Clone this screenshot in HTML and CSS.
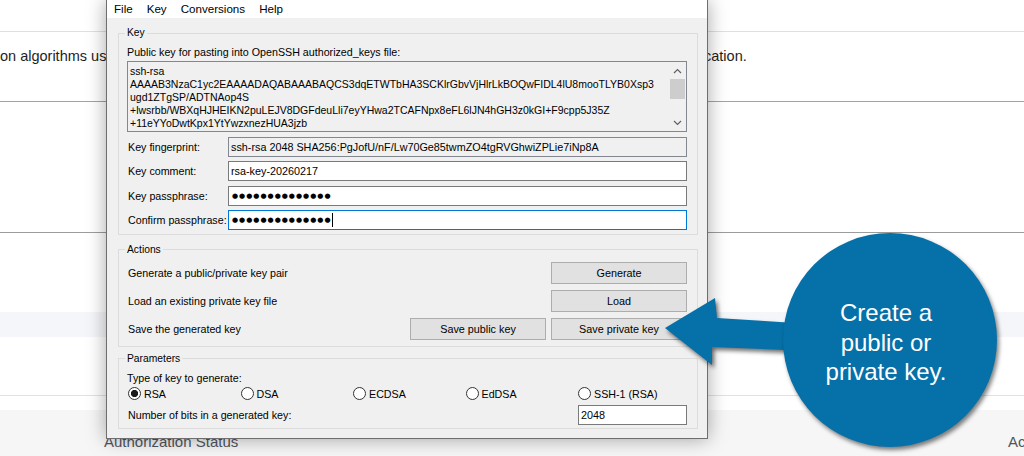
FILE: index.html
```html
<!DOCTYPE html>
<html lang="en">
<head>
<meta charset="utf-8">
<title>PuTTY Key Generator</title>
<link rel="stylesheet" href="styles.css">
</head>
<body>
<div class="page">
  <div class="pg-top"></div>
  <div class="pg-desc">
    <span class="pg-desc-left">on algorithms used</span>
    <span class="pg-desc-right">cation.</span>
  </div>
  <div class="pg-rows"></div>
  <div class="pg-gap"></div>
  <div class="pg-band"></div>
  <div class="pg-gap2"></div>
  <div class="pg-gap3"></div>
  <div class="pg-footer">
    <span class="ft-left">Authorization Status</span>
    <span class="ft-right">Actions</span>
  </div>
</div>

<div class="putty">
  <div class="menubar">
    <span>File</span><span>Key</span><span>Conversions</span><span>Help</span>
  </div>
  <div class="putty-body">
    <fieldset class="grp grp-key">
      <legend>Key</legend>
      <div class="lbl">Public key for pasting into OpenSSH authorized_keys file:</div>
      <div class="keybox">
        <div class="keytext">ssh-rsa
AAAAB3NzaC1yc2EAAAADAQABAAABAQCS3dqETWTbHA3SCKlrGbvVjHlrLkBOQwFIDL4lU8mooTLYB0Xsp3
ugd1ZTgSP/ADTNAop4S
+lwsrbb/WBXqHJHEIKN2puLEJV8DGFdeuLli7eyYHwa2TCAFNpx8eFL6lJN4hGH3z0kGI+F9cpp5J35Z
+11eYYoDwtKpx1YtYwzxnezHUA3jzb</div>
        <div class="vscroll">
          <svg class="arr" width="9" height="6" viewBox="0 0 9 6"><polyline points="1,5 4.5,1.5 8,5" fill="none" stroke="#606060" stroke-width="1.2"/></svg>
          <div class="thumb"></div>
          <div class="track"></div>
          <svg class="arr" width="9" height="6" viewBox="0 0 9 6"><polyline points="1,1 4.5,4.5 8,1" fill="none" stroke="#606060" stroke-width="1.2"/></svg>
        </div>
      </div>
      <div class="rows">
        <div class="field-row"><span class="flabel">Key fingerprint:</span><div class="fld ro">ssh-rsa 2048 SHA256:PgJofU/nF/Lw70Ge85twmZO4tgRVGhwiZPLie7iNp8A</div></div>
        <div class="field-row"><span class="flabel">Key comment:</span><div class="fld">rsa-key-20260217</div></div>
        <div class="field-row"><span class="flabel">Key passphrase:</span><div class="fld dots">●●●●●●●●●●●●●●</div></div>
        <div class="field-row"><span class="flabel">Confirm passphrase:</span><div class="fld dots focus">●●●●●●●●●●●●●●<span class="caret"></span></div></div>
      </div>
    </fieldset>

    <fieldset class="grp grp-act">
      <legend>Actions</legend>
      <div class="act-row"><span class="act-lbl">Generate a public/private key pair</span><span class="btn">Generate</span></div>
      <div class="act-row"><span class="act-lbl">Load an existing private key file</span><span class="btn">Load</span></div>
      <div class="act-row"><span class="act-lbl">Save the generated key</span><span class="btn">Save public key</span><span class="btn">Save private key</span></div>
    </fieldset>

    <fieldset class="grp grp-par">
      <legend>Parameters</legend>
      <div class="lbl">Type of key to generate:</div>
      <div class="radios">
        <span class="radio"><i class="on"></i>RSA</span>
        <span class="radio"><i></i>DSA</span>
        <span class="radio"><i></i>ECDSA</span>
        <span class="radio"><i></i>EdDSA</span>
        <span class="radio"><i></i>SSH-1 (RSA)</span>
      </div>
      <div class="bits-row"><span class="flabel">Number of bits in a generated key:</span><div class="fld bits">2048</div></div>
    </fieldset>
  </div>
</div>

<svg class="callout-arrow" width="170" height="100" viewBox="0 0 170 100">
  <polygon points="25,48 75,18 77,38 170,44 170,71 72,67 72,85" fill="#0670a8"/>
</svg>
<div class="callout">Create a<br>public or<br>private key.</div>
</body>
</html>
```

FILE: styles.css
```css
html, body {
  margin: 0;
  padding: 0;
}
body {
  width: 1024px;
  height: 456px;
  overflow: hidden;
  position: relative;
  background: #fff;
  font-family: "Liberation Sans", Arial, sans-serif;
  color: #000;
}

/* ---------- background page ---------- */
.page {
  display: flex;
  flex-direction: column;
  height: 456px;
}
.pg-top {
  height: 31px;
  border-bottom: 1px solid #e0e0e0;
  flex: none;
}
.pg-desc {
  height: 70px;
  border-bottom: 1px solid #a3a3a3;
  display: grid;
  grid-template-columns: 704px auto;
  align-items: start;
  padding-top: 14px;
  box-sizing: border-box;
  font-size: 14.5px;
  line-height: 20px;
  color: #1e1e1e;
  flex: none;
}
.pg-desc-left {
  white-space: nowrap;
  overflow: hidden;
}
.pg-desc-right {
  white-space: nowrap;
}
.pg-rows {
  height: 130px;
  border-bottom: 1px solid #9c9c9c;
  flex: none;
}
.pg-gap {
  height: 79px;
  flex: none;
}
.pg-band {
  height: 25px;
  background: #f5f6f9;
  flex: none;
}
.pg-gap2 {
  height: 58px;
  border-bottom: 1px solid #e2e2e2;
  flex: none;
}
.pg-gap3 {
  height: 14px;
  flex: none;
}
.pg-footer {
  flex: 1;
  background: #f6f6f6;
  display: grid;
  grid-template-columns: 904px auto;
  padding-left: 104px;
  padding-top: 22px;
  font-size: 15px;
  line-height: 20px;
  color: #50555f;
  white-space: nowrap;
  overflow: hidden;
}

/* ---------- PuTTYgen window ---------- */
.putty {
  position: absolute;
  left: 106px;
  top: 0;
  width: 600px;
  height: 438px;
  border: 1px solid #6e6e6e;
  border-top: none;
  background: #f0f0f0;
  box-shadow: 0 0 18px rgba(0, 0, 0, 0.35);
  font-size: 10.7px;
  line-height: 14px;
  display: flex;
  flex-direction: column;
  z-index: 2;
}
.menubar {
  height: 18px;
  background: #fff;
  display: flex;
  line-height: 18px;
  font-size: 11.6px;
  flex: none;
}
.menubar span {
  padding: 0 7px;
}
.putty-body {
  padding: 8px 9px 0 11px;
  display: flex;
  flex-direction: column;
}
.grp {
  margin: 0;
  min-width: 0;
  border: 1px solid #dcdcdc;
  padding: 5px 10px 0 8px;
}
.grp legend {
  padding: 0 2px;
  margin-left: -2px;
  line-height: 14px;
  font-size: 10.3px;
}
.grp-key {
  padding-bottom: 4px;
}
.grp-act {
  margin-top: 8px;
  padding-bottom: 6px;
  display: flex;
  flex-direction: column;
  gap: 6px;
}
.grp-par {
  margin-top: 5px;
  padding-bottom: 3px;
}
.lbl {
  line-height: 14px;
}

.keybox {
  margin-top: 2px;
  height: 69px;
  border: 1px solid #828790;
  background: #f0f0f0;
  display: flex;
}
.keytext {
  flex: 1;
  padding: 3px 2px 0 2px;
  font-size: 10.5px;
  line-height: 13px;
  white-space: pre;
  overflow: hidden;
}
.vscroll {
  width: 17px;
  display: flex;
  flex-direction: column;
  align-items: center;
  padding-top: 6px;
  padding-bottom: 5px;
  flex: none;
}
.vscroll .thumb {
  margin-top: 5px;
  width: 15px;
  height: 20px;
  background: #cdcdcd;
}
.vscroll .track {
  flex: 1;
}

.rows {
  margin-top: 5px;
  display: flex;
  flex-direction: column;
  gap: 4.33px;
}
.field-row {
  display: grid;
  grid-template-columns: 101px 1fr;
  align-items: center;
}
.flabel {
  padding-left: 1px;
  white-space: nowrap;
}
.fld {
  height: 18px;
  border: 1px solid #7a7a7a;
  background: #fff;
  padding: 0 2px;
  line-height: 18px;
  font-size: 10.8px;
  white-space: nowrap;
  overflow: hidden;
}
.fld.ro {
  background: #f0f0f0;
  border-color: #828790;
}
.fld.focus {
  border-color: #0078d7;
}
.fld.dots {
  font-family: "DejaVu Sans", sans-serif;
  font-size: 7px;
  letter-spacing: 1px;
  display: flex;
  align-items: center;
  padding-left: 3px;
}
.caret {
  display: inline-block;
  width: 1px;
  height: 14px;
  background: #000;
}

.act-row {
  display: flex;
  align-items: center;
  height: 22px;
  gap: 5px;
}
.act-lbl {
  flex: 1;
  padding-left: 1px;
}
.btn {
  width: 134px;
  height: 20px;
  border: 1px solid #adadad;
  background: #e1e1e1;
  text-align: center;
  line-height: 20px;
  font-size: 10.8px;
  flex: none;
}

.radios {
  margin-top: 2px;
  display: grid;
  grid-template-columns: repeat(4, 112.5px) auto;
  line-height: 14px;
}
.radio {
  display: flex;
  align-items: center;
  gap: 3px;
  padding-left: 1px;
}
.radio i {
  width: 11px;
  height: 11px;
  border: 1px solid #333;
  border-radius: 50%;
  background: #fff;
  flex: none;
}
.radio i.on {
  background: radial-gradient(circle, #1a1a1a 0 3.3px, #fff 3.9px);
}
.bits-row {
  margin-top: 4px;
  display: flex;
  justify-content: space-between;
  align-items: center;
}
.fld.bits {
  width: 103px;
}

/* ---------- callout ---------- */
.callout-arrow {
  position: absolute;
  left: 640px;
  top: 280px;
  z-index: 3;
  filter: drop-shadow(2px 3px 2px rgba(0, 0, 0, 0.55));
}
.callout {
  position: absolute;
  left: 783px;
  top: 233px;
  width: 214px;
  height: 214px;
  border-radius: 50%;
  background: #0670a8;
  box-shadow: 2px 3px 4px rgba(0, 0, 0, 0.5);
  z-index: 4;
  display: flex;
  align-items: center;
  justify-content: center;
  text-align: center;
  color: #fff;
  font-size: 24px;
  line-height: 29.5px;
  padding: 5px 8px 0 0;
  box-sizing: border-box;
}
```
